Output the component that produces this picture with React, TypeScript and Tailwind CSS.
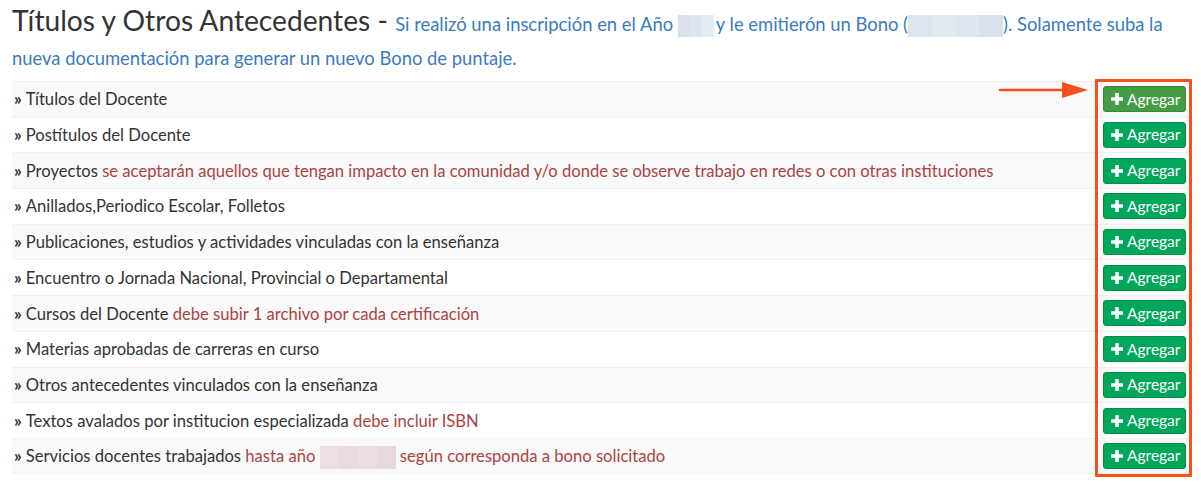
import React from "react";

type Row = { label: string; note?: React.ReactNode };

const rows: Row[] = [
  { label: "Títulos del Docente" },
  { label: "Postítulos del Docente" },
  {
    label: "Proyectos",
    note: "se aceptarán aquellos que tengan impacto en la comunidad y/o donde se observe trabajo en redes o con otras instituciones",
  },
  { label: "Anillados,Periodico Escolar, Folletos" },
  { label: "Publicaciones, estudios y actividades vinculadas con la enseñanza" },
  { label: "Encuentro o Jornada Nacional, Provincial o Departamental" },
  { label: "Cursos del Docente", note: "debe subir 1 archivo por cada certificación" },
  { label: "Materias aprobadas de carreras en curso" },
  { label: "Otros antecedentes vinculados con la enseñanza" },
  { label: "Textos avalados por institucion especializada", note: "debe incluir ISBN" },
  {
    label: "Servicios docentes trabajados",
    note: (
      <>
        hasta año{" "}
        <span className="inline-flex h-[23px] w-[76px] align-middle">
          <span className="flex-1 bg-[#ecdfe1]" />
          <span className="flex-1 bg-[#e9dadd]" />
          <span className="flex-1 bg-[#ebdee0]" />
          <span className="flex-1 bg-[#e7d8db]" />
        </span>{" "}
        según corresponda a bono solicitado
      </>
    ),
  },
];

function PlusIcon() {
  return (
    <svg width="12" height="12" viewBox="0 0 12 12" className="shrink-0">
      <rect x="4.2" y="0" width="3.6" height="12" rx="0.6" fill="white" />
      <rect x="0" y="4.2" width="12" height="3.6" rx="0.6" fill="white" />
    </svg>
  );
}

export default function App() {
  return (
    <div
      className="relative w-[1201px] h-[497px] bg-white text-[#333]"
      style={{ fontFamily: "Lato, 'Open Sans', sans-serif" }}
    >
      <div className="pl-[12px] pr-[12px] pt-[6px]">
        <h1 className="text-[18.4px] leading-[34px] font-normal">
          <span className="text-[28.2px] leading-none text-[#333]">Títulos y Otros Antecedentes</span>
          <span className="text-[28.2px] leading-none text-[#333]"> - </span>
          <span className="text-[#3a7bbf]">
            Si realizó una inscripción en el Año{" "}
            <span className="inline-flex h-[22px] w-[36px] align-middle mr-[2px]">
              <span className="flex-1 bg-[#d8e1ec]" />
              <span className="flex-1 bg-[#dde5ef]" />
              <span className="flex-1 bg-[#e6ecf4]" />
            </span>
            y le emitierón un Bono (
            <span className="inline-flex h-[22px] w-[95px] align-middle">
              <span className="flex-1 bg-[#dce4ee]" />
              <span className="flex-1 bg-[#e4eaf2]" />
              <span className="flex-1 bg-[#dfe6ef]" />
              <span className="flex-1 bg-[#d9e2ec]" />
            </span>
            ). Solamente suba la nueva documentación para generar un nuevo Bono de puntaje.
          </span>
        </h1>
      </div>

      <div className="mx-[12px] mt-[6px] w-[1176px]">
        {rows.map((r, i) => (
          <div
            key={i}
            className={`flex items-center h-[35.7px] border-t border-[#f0f0f0] ${
              i % 2 === 0 ? "bg-[#f9f9f9]" : "bg-white"
            } ${i === rows.length - 1 ? "border-b" : ""}`}
          >
            <div className="flex-1 pl-[2px] text-[16.6px] whitespace-nowrap">
              <span className="text-[17px] font-bold mr-[4px]">»</span>
              {r.label}
              {r.note ? <span className="text-[#a94442]"> {r.note}</span> : null}
            </div>
            <div className="w-[84px] mr-[2px] flex justify-end">
              <button
                className={`flex items-center gap-[4px] h-[26px] w-[83px] pl-[7px] rounded-[3px] border text-white text-[15.5px] ${
                  i === 0
                    ? "bg-[#449d44] border-[#398439]"
                    : "bg-[#00a65a] border-[#008d4c]"
                }`}
              >
                <PlusIcon />
                <span>Agregar</span>
              </button>
            </div>
          </div>
        ))}
      </div>

      {/* annotation box */}
      <div className="absolute left-[1095px] top-[79px] w-[97px] h-[398px] border-[3px] border-[#f4511e] rounded-[1px]" />
      {/* arrow */}
      <svg className="absolute left-[998px] top-[80px]" width="92" height="20" viewBox="0 0 92 20">
        <line x1="2" y1="10" x2="68" y2="10" stroke="#f4511e" strokeWidth="2.5" strokeLinecap="round" />
        <polygon points="64,2 90,10 64,18" fill="#f4511e" />
      </svg>
    </div>
  );
}
